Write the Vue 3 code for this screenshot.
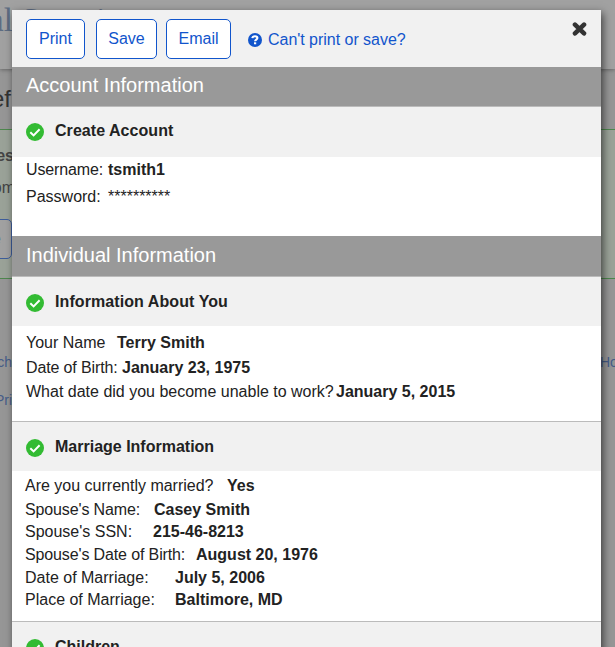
<script setup>
const sections = [
  {
    key: 'account', band: 'Account Information',
    groups: [
      { key: 'create', title: 'Create Account', rows: [
        { label: 'Username:', value: 'tsmith1', col: 82, tight: true },
        { label: 'Password:', value: '**********', plain: true, col: 82 },
      ] },
    ],
  },
  {
    key: 'individual', band: 'Individual Information',
    groups: [
      { key: 'about', title: 'Information About You', rows: [
        { label: 'Your Name', value: 'Terry Smith', col: 91 },
        { label: 'Date of Birth:', value: 'January 23, 1975', col: 96, tight: true },
        { label: 'What date did you become unable to work?', value: 'January 5, 2015', col: 310 },
      ] },
      { key: 'marriage', title: 'Marriage Information', rows: [
        { label: 'Are you currently married?', value: 'Yes', col: 202 },
        { label: "Spouse's Name:", value: 'Casey Smith', col: 129, tight: true },
        { label: "Spouse's SSN:", value: '215-46-8213', col: 128 },
        { label: "Spouse's Date of Birth:", value: 'August 20, 1976', col: 171, tight: true },
        { label: 'Date of Marriage:', value: 'July 5, 2006', col: 150 },
        { label: 'Place of Marriage:', value: 'Baltimore, MD', col: 150 },
      ] },
      { key: 'children', title: 'Children', rows: [] },
    ],
  },
]
</script>

<template>
  <div class="screen">
    <div class="page">
      <header class="site"><span>al Security</span></header>
      <div class="heading"><span class="left">ef</span></div>
      <div class="panel">
        <div class="left strong">es</div>
        <div class="left body-copy">om</div>
        <div class="ghost-button"><i>e</i></div>
      </div>
      <div class="links first"><span class="left">rch</span><span class="right">Home</span></div>
      <div class="links"><span class="left">Pri</span></div>
    </div>
    <main class="modal">
      <div class="toolbar">
        <button class="print">Print</button>
        <button class="save">Save</button>
        <button class="email">Email</button>
        <a class="help">
          <svg width="14" height="14" viewBox="0 0 14 14"><circle cx="7" cy="7" r="7" fill="#1155cc" /><path d="M4.3 5.2C4.5 3.8 5.5 3.2 7 3.2c1.4 0 2.4.6 2.4 1.8 0 1.6-2.3 1.5-2.3 3.2" fill="none" stroke="#fff" stroke-width="2.1" /><path d="M6 9.3h2.2v2H6z" fill="#fff" /></svg>
          <span>Can't print or save?</span>
        </a>
        <svg class="close" width="15" height="14" viewBox="0 0 15 14"><path d="M3 2.7 12 11.3M12 2.7 3 11.3" stroke="#333" stroke-width="4.6" stroke-linecap="round" /></svg>
      </div>
      <section v-for="s in sections" :key="s.key">
        <h2 :class="s.key"><span>{{ s.band }}</span></h2>
        <div v-for="g in s.groups" :key="g.key">
          <h3 :class="g.key">
            <svg width="18" height="18" viewBox="0 0 18 18"><circle cx="9" cy="9" r="9" fill="#33bb33" /><path d="m4.3 9.2 3.3 3.2 6-6.1" fill="none" stroke="#fff" stroke-width="2" /></svg>
            <span>{{ g.title }}</span>
          </h3>
          <div v-if="g.rows.length" class="rows" :class="g.key">
            <div v-for="r in g.rows" :key="r.label" class="row">
              <span class="label" :class="{ tight: r.tight }" :style="{ width: r.col + 'px' }">{{ r.label }}</span>
              <span class="value" :class="{ plain: r.plain }">{{ r.value }}</span>
            </div>
          </div>
        </div>
      </section>
    </main>
  </div>
</template>

<style>
body { margin: 0; overflow: hidden; }
</style>
<style scoped>
* { box-sizing: border-box; }
.screen { position: relative; width: 615px; height: 647px; overflow: hidden; font: 16px/20px "Liberation Sans", Arial, sans-serif; color: #222; white-space: nowrap; }
.page { height: 647px; background: #969696; }
.site { height: 69px; background: #a1a1a1; box-shadow: 0 1px 4px #666; font: 33px/38px "Liberation Serif", serif; color: #5d6c82; overflow: hidden; padding-top: 1px; }
.site span { display: block; margin-left: -11px; }
.left { width: 12px; display: flex; justify-content: flex-end; }
.heading { height: 60px; padding-top: 16px; font-size: 24px; line-height: 28px; color: #333; }
.heading .left { width: 11px; }
.panel { height: 150px; background: #9aa298; border: solid #4d874d; border-width: 1px 0; padding-top: 16px; }
.left.strong { width: 14px; font-weight: bold; color: #444; }
.left.body-copy { width: 15px; margin-top: 12px; color: #444; }
.ghost-button { margin: 21px 0 0 -40px; width: 52px; height: 40px; border: 1px solid #3d5d9b; border-radius: 5px; background: #a1a1a1; color: #526da2; padding: 9px 0 0 31px; }
.ghost-button i { font-style: normal; }
.links { display: flex; justify-content: space-between; height: 38px; font-size: 14px; color: #455c88; }
.links.first { margin-top: 73px; }
.right { width: 15px; }
.modal { position: absolute; left: 12px; top: 10px; width: 589px; height: 650px; background: #fff; box-shadow: 2px 3px 8px rgba(0,0,0,.6); overflow: hidden; }
.toolbar { display: flex; align-items: flex-start; height: 57px; padding: 9px 14px 0 14px; background: #f1f1f1; }
button { height: 40px; padding: 0; background: #fff; border: 1px solid #1155cc; border-radius: 5px; color: #1155cc; font: 16px/20px "Liberation Sans", Arial, sans-serif; }
.print { width: 59px; }
.save { width: 61px; margin-left: 11px; }
.email { width: 65px; margin-left: 9px; }
.help { display: flex; align-items: center; gap: 6px; margin: 11px 0 0 17px; color: #1155cc; }
.help span { letter-spacing: -0.03px; }
.help svg { margin-top: -1px; }
.close { margin: 3px 0 0 auto; }
h2 { margin: 0; height: 40px; padding: 6px 14px 0; background: #999; border-bottom: 1px solid #bbb; color: #fff; font-size: 20px; line-height: 24px; font-weight: normal; }
h2.individual { height: 41px; padding-top: 7px; }
h3 { margin: 0; height: 50px; display: flex; align-items: flex-start; gap: 11.5px; padding: 14px 13.5px; background: #f1f1f1; font-size: 16px; line-height: 20px; }
h3 svg { margin-top: 2px; }
h3.create span { letter-spacing: 0.05px; }
h3.about { height: 49px; padding-top: 15px; }
h3.about span { letter-spacing: 0.08px; }
h3.marriage, h3.children { height: 50px; border-top: 1px solid #bbb; padding-top: 15px; }
.rows { display: grid; align-content: start; }
.row { display: flex; line-height: 20px; }
.rows.create { height: 79px; padding: 3px 14px; grid-template-rows: 27px 27px; }
.rows.about { height: 95px; padding: 7px 14px; grid-template-rows: 25px 24px 24px; }
.rows.marriage { height: 150px; padding: 5px 13px; grid-template-rows: 24px 22px 23px 23px 22px 22px; }
.label { flex: none; }
.label.tight { letter-spacing: -0.13px; }
.value { font-weight: bold; }
.value.plain { font-weight: normal; }
</style>
